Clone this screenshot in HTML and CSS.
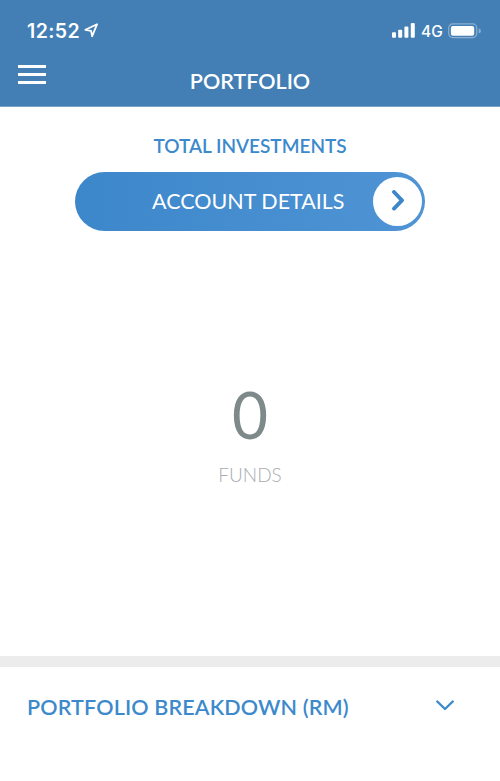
FILE: index.html
```html
<!DOCTYPE html>
<html lang="en">
<head>
<meta charset="utf-8">
<title>Portfolio</title>
<link rel="stylesheet" href="styles.css">
</head>
<body>
<header class="header">
  <div class="status">
    <span class="time">12:52</span>
    <svg class="location" width="15" height="15" viewBox="0 0 15 15"><path d="M1.4 6.8 13 1.3 8.2 13.2 7 7.8Z"/></svg>
    <svg class="signal" width="23" height="15" viewBox="0 0 23 15"><rect x="0" y="9.3" width="4" height="5.4" rx="1"/><rect x="6.2" y="6.8" width="4" height="7.9" rx="1"/><rect x="12.4" y="3.6" width="4" height="11.1" rx="1"/><rect x="18.8" y="0" width="4" height="14.7" rx="1"/></svg>
    <span class="network">4G</span>
    <svg class="battery" width="33" height="16" viewBox="0 0 33 16"><rect class="shell" x=".7" y=".9" width="28" height="13.7" rx="4"/><rect x="2.9" y="3" width="23.3" height="9.7" rx="2"/><path class="tip" d="M30.7 5.2q2.3 1 2.3 2.7t-2.3 2.7Z"/></svg>
  </div>
  <div class="nav">
    <svg class="menu" width="28" height="19" viewBox="0 0 28 19"><path d="M0 1.5H28M0 9.5H28M0 17.4H28"/></svg>
    <h1 class="title">PORTFOLIO</h1>
  </div>
</header>
<main>
  <h2 class="total">TOTAL INVESTMENTS</h2>
  <div class="account">
    <span class="account-label">ACCOUNT DETAILS</span>
    <span class="knob"><svg width="12" height="21" viewBox="0 0 12 21"><path d="M2 2 10 10.4 2 18.6"/></svg></span>
  </div>
  <section class="funds">
    <div class="count">0</div>
    <div class="funds-label">FUNDS</div>
  </section>
  <section class="breakdown">
    <h2 class="breakdown-title">PORTFOLIO BREAKDOWN (RM)</h2>
    <svg class="chevron" width="18" height="11" viewBox="0 0 18 11"><path d="M1.3 1.5 9 9 16.7 1.5"/></svg>
  </section>
</main>
</body>
</html>
```
FILE: styles.css
```css
* { box-sizing: border-box; }
body { margin: 0; background: #fff; color: #3c89cc; font-family: Lato, "Open Sans", sans-serif; overflow: hidden; }
h1, h2 { margin: 0; }
svg { display: block; flex: none; }
.header { height: 107px; background: #437fb5; border-bottom: 1px solid #79a3c9; color: #fff; }
.status { display: flex; padding: 23px 19px 0 27px; height: 50px; font-family: Inter, sans-serif; white-space: nowrap; }
.time { width: 56px; font-size: 19.5px; line-height: 16px; font-weight: 600; letter-spacing: .4px; }
.location { fill: none; stroke: #fff; stroke-width: 1.8; stroke-linejoin: round; margin-left: 1px; }
.signal { fill: #fff; margin-left: auto; }
.network { width: 27px; margin: 0 0 0 6px; font-size: 15.5px; line-height: 17px; font-weight: 500; }
.battery { fill: #fff; }
.battery .shell { fill: none; stroke: #8bb0d1; stroke-width: 1.2; }
.battery .tip { fill: #8bb0d1; }
.nav { display: grid; grid-template-columns: 28px 1fr 28px; padding: 15px 18px 0; }
.menu { stroke: #fff; stroke-width: 3; }
.title { font-size: 21.5px; line-height: 32px; font-weight: 600; text-align: center; }
.total { margin-top: 32px; height: 33px; text-align: center; font-size: 19px; line-height: 14px; font-weight: 600; }
.account { width: 350px; height: 59px; margin: 0 auto; padding-right: 3px; border-radius: 30px; display: flex; align-items: center; justify-content: flex-end; background: linear-gradient(90deg, #3c87ca, #4f94d5); color: #fff; }
.account-label { width: 221px; padding-bottom: 2px; font-size: 21.5px; line-height: 24px; font-weight: 400; white-space: nowrap; }
.knob { width: 49px; height: 49px; border-radius: 50%; background: #fff; display: flex; align-items: center; justify-content: center; padding-bottom: 3px; }
.knob svg { fill: none; stroke: #3c87ca; stroke-width: 3.8; stroke-linecap: round; stroke-linejoin: round; }
.funds { height: 425px; padding-top: 149px; text-align: center; }
.count { height: 85px; font-size: 66px; line-height: 68px; color: #7e8989; transform: scaleX(.94); }
.funds-label { font-size: 19px; line-height: 20px; font-weight: 300; color: #a8adb3; }
.breakdown { display: flex; height: 125px; border-top: 11px solid #ececec; padding: 28px 46px 0 27px; justify-content: space-between; }
.breakdown-title { font-size: 21.5px; line-height: 24px; font-weight: 600; letter-spacing: .15px; white-space: nowrap; }
.chevron { margin-top: 5px; fill: none; stroke: #3c89cc; stroke-width: 2.4; stroke-linecap: round; stroke-linejoin: round; }
```
